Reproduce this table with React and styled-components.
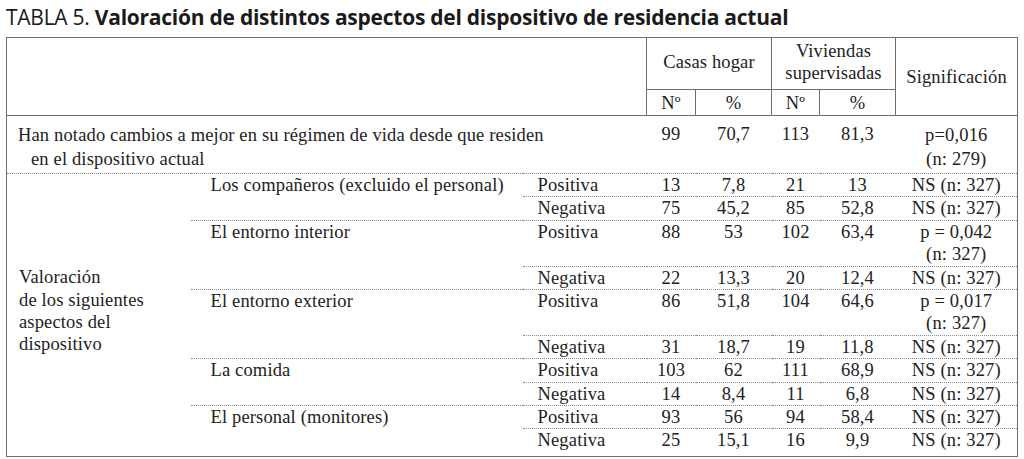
import React from 'react';
import styled, { createGlobalStyle } from 'styled-components';

const GlobalStyle = createGlobalStyle`
  html, body {
    margin: 0;
    padding: 0;
    background: #ffffff;
  }
`;

const Page = styled.div`
  padding: 5px 7px 6px 6px;
  color: #1f1f1f;
`;

const Caption = styled.h1`
  margin: 0 0 7px;
  font-family: "Open Sans", "Liberation Sans", sans-serif;
  font-size: 21px;
  line-height: 25px;
  font-weight: 400;
  letter-spacing: -0.25px;
  white-space: nowrap;
  color: #1a1a1a;

  strong {
    font-weight: 700;
  }
`;

const Table = styled.table`
  width: 1011px;
  border-collapse: collapse;
  table-layout: fixed;
  border: 1px solid #6e6e6e;
  font-family: "Liberation Serif", "Times New Roman", serif;
  font-size: 18.5px;
  letter-spacing: 0.15px;
  color: #222;
`;

const Head = styled.thead`
  border-bottom: 1px solid #6e6e6e;
`;

const Th = styled.th`
  font-weight: 400;
  text-align: center;
  vertical-align: middle;
  padding: ${p => p.$pad || '0'};
  line-height: 22px;
  height: ${p => p.$h || 'auto'};
  border-left: ${p => (p.$edge ? '1px solid #6e6e6e' : 'none')};
  border-top: ${p => (p.$top ? '1px solid #6e6e6e' : 'none')};
`;

const Td = styled.td`
  padding: ${p => p.$pad || '0'};
  padding-left: ${p => p.$indent || '0'};
  line-height: 22.4px;
  vertical-align: ${p => p.$valign || 'top'};
  text-align: ${p => p.$align || 'center'};
  border-top: ${p => (p.$rule ? '1px dotted #8a8a8a' : 'none')};
  white-space: nowrap;
`;

const Lines = styled.div`
  line-height: ${p => p.$lh || '22.4px'};
`;

const Hanging = styled.div`
  padding-left: 13px;
  text-indent: -13px;
  line-height: 24px;
  white-space: normal;
`;

const cols = [184, 332, 124, 49, 76, 48, 76, 122];

const aspects = [
  {
    name: 'Los compañeros (excluido el personal)',
    pos: ['13', '7,8', '21', '13', ['NS (n: 327)']],
    neg: ['75', '45,2', '85', '52,8', ['NS (n: 327)']],
  },
  {
    name: 'El entorno interior',
    pos: ['88', '53', '102', '63,4', ['p = 0,042', '(n: 327)']],
    neg: ['22', '13,3', '20', '12,4', ['NS (n: 327)']],
  },
  {
    name: 'El entorno exterior',
    pos: ['86', '51,8', '104', '64,6', ['p = 0,017', '(n: 327)']],
    neg: ['31', '18,7', '19', '11,8', ['NS (n: 327)']],
  },
  {
    name: 'La comida',
    pos: ['103', '62', '111', '68,9', ['NS (n: 327)']],
    neg: ['14', '8,4', '11', '6,8', ['NS (n: 327)']],
  },
  {
    name: 'El personal (monitores)',
    pos: ['93', '56', '94', '58,4', ['NS (n: 327)']],
    neg: ['25', '15,1', '16', '9,9', ['NS (n: 327)']],
  },
];

const Values = ({ values, rule, last }) => {
  const pad = last ? '0 0 4px' : '0';
  return (
    <>
      {values.slice(0, 4).map((v, i) => (
        <Td key={i} $rule={rule} $pad={pad}>{v}</Td>
      ))}
      <Td $rule={rule} $pad={pad}>
        {values[4].map((l, i) => (
          <Lines key={i}>{l}</Lines>
        ))}
      </Td>
    </>
  );
};

const App = () => {
  return (
    <Page>
      <GlobalStyle />
      <Caption>
        TABLA 5. <strong>Valoración de distintos aspectos del dispositivo de residencia actual</strong>
      </Caption>
      <Table>
        <colgroup>
          {cols.map((w, i) => (
            <col key={i} style={{ width: w }} />
          ))}
        </colgroup>
        <Head>
          <tr>
            <Th colSpan={3} rowSpan={2} />
            <Th colSpan={2} $edge $h="47px" $pad="0 0 4px">Casas hogar</Th>
            <Th colSpan={2} $edge $h="47px" $pad="0 0 4px">
              Viviendas
              <br />
              supervisadas
            </Th>
            <Th rowSpan={2} $edge>Significación</Th>
          </tr>
          <tr>
            <Th $edge $top $h="25px">Nº</Th>
            <Th $edge $top $h="25px">%</Th>
            <Th $edge $top $h="25px">Nº</Th>
            <Th $edge $top $h="25px">%</Th>
          </tr>
        </Head>
        <tbody>
          <tr>
            <Td colSpan={3} $align="left" $indent="11px" $pad="7px 0 2px">
              <Hanging>
                Han notado cambios a mejor en su régimen de vida desde que residen
                <br />
                en el dispositivo actual
              </Hanging>
            </Td>
            <Td $pad="7px 0 2px">99</Td>
            <Td $pad="7px 0 2px">70,7</Td>
            <Td $pad="7px 0 2px">113</Td>
            <Td $pad="7px 0 2px">81,3</Td>
            <Td $pad="7px 0 2px">
              <Lines $lh="24px">p=0,016</Lines>
              <Lines $lh="24px">(n: 279)</Lines>
            </Td>
          </tr>
          {aspects.map((a, i) => {
            const last = i === aspects.length - 1;
            return (
              <React.Fragment key={a.name}>
                <tr>
                  {i === 0 && (
                    <Td rowSpan={10} $rule $align="left" $indent="12px" $valign="middle" $pad="0 0 8px">
                      Valoración
                      <br />
                      de los siguientes
                      <br />
                      aspectos del
                      <br />
                      dispositivo
                    </Td>
                  )}
                  <Td rowSpan={2} $rule $align="left" $indent="20px">{a.name}</Td>
                  <Td $rule $align="left" $indent="15px">Positiva</Td>
                  <Values values={a.pos} rule />
                </tr>
                <tr>
                  <Td $rule $align="left" $indent="15px" $pad={last ? '0 0 4px' : '0'}>Negativa</Td>
                  <Values values={a.neg} rule last={last} />
                </tr>
              </React.Fragment>
            );
          })}
        </tbody>
      </Table>
    </Page>
  );
};

export default App;
